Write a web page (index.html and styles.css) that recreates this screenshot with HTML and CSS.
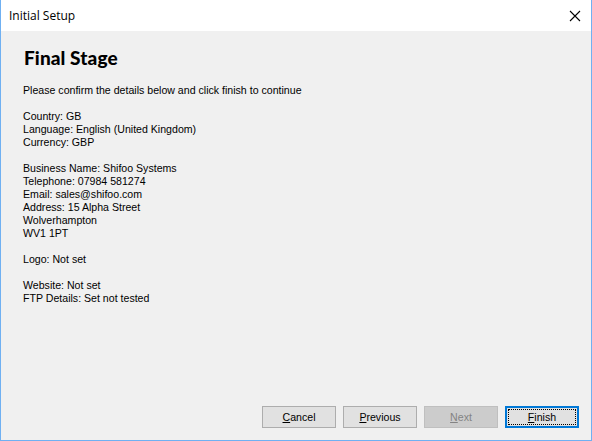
FILE: index.html
```html
<!DOCTYPE html>
<html>
<head>
<meta charset="utf-8">
<link rel="stylesheet" href="styles.css">
</head>
<body>
<div class="window">
  <div class="titlebar">
    <span class="title">Initial Setup</span>
    <svg class="close" width="12" height="12" viewBox="0 0 12 12"><path d="M1 1L11 11M11 1L1 11" stroke="#000" stroke-width="1.1"/></svg>
  </div>
  <div class="content">
    <h1 class="heading">Final Stage</h1>
    <div class="details">Please confirm the details below and click finish to continue

Country: GB
Language: English (United Kingdom)
Currency: GBP

Business Name: Shifoo Systems
Telephone: 07984 581274
Email: sales@shifoo.com
Address: 15 Alpha Street
Wolverhampton
WV1 1PT

Logo: Not set

Website: Not set
FTP Details: Set not tested</div>
  </div>
  <div class="buttons">
    <button class="btn"><u>C</u>ancel</button>
    <button class="btn"><u>P</u>revious</button>
    <button class="btn disabled"><u>N</u>ext</button>
    <button class="btn default"><span class="focus"><u>F</u>inish</span></button>
  </div>
</div>
</body>
</html>
```

FILE: styles.css
```css
html, body {
  margin: 0;
  padding: 0;
  width: 592px;
  height: 441px;
  overflow: hidden;
}
.window {
  box-sizing: border-box;
  width: 592px;
  height: 441px;
  border: 1px solid #6fb0f2;
  border-top: none;
  background: #f0f0f0;
  display: flex;
  flex-direction: column;
  font-family: "Liberation Sans", Arial, sans-serif;
  font-size: 10.6px;
  color: #000;
}
.titlebar {
  height: 31px;
  background: #fff;
  display: flex;
  align-items: center;
  justify-content: space-between;
  padding: 0 10px 0 8px;
  flex: none;
}
.title {
  font-family: "Open Sans", "Noto Sans", sans-serif;
  font-size: 12px;
  color: #000;
}
.content {
  flex: 1;
  padding: 16px 0 0 22px;
}
.heading {
  margin: 0;
  font-family: "Lato", sans-serif;
  font-weight: 900;
  font-size: 19px;
  line-height: 22px;
  letter-spacing: 0.1px;
  padding-left: 1px;
}
.details {
  white-space: pre;
  margin-top: 15px;
  line-height: 13px;
  font-size: 10.6px;
}
.buttons {
  display: flex;
  justify-content: flex-end;
  gap: 7px;
  padding: 0 12px 12px 0;
  flex: none;
}
.btn {
  box-sizing: border-box;
  width: 74px;
  height: 22px;
  background: #e1e1e1;
  border: 1px solid #adadad;
  font-family: "Liberation Sans", Arial, sans-serif;
  font-size: 10.6px;
  color: #000;
  padding: 0;
  display: flex;
  align-items: center;
  justify-content: center;
}
.btn.disabled {
  background: #cccccc;
  border-color: #bfbfbf;
  color: #838383;
}
.btn.default {
  border: 2px solid #0078d7;
  padding: 1px;
}
.focus {
  box-sizing: border-box;
  width: 100%;
  height: 100%;
  border: 1px dotted #000;
  display: flex;
  align-items: center;
  justify-content: center;
}
```
